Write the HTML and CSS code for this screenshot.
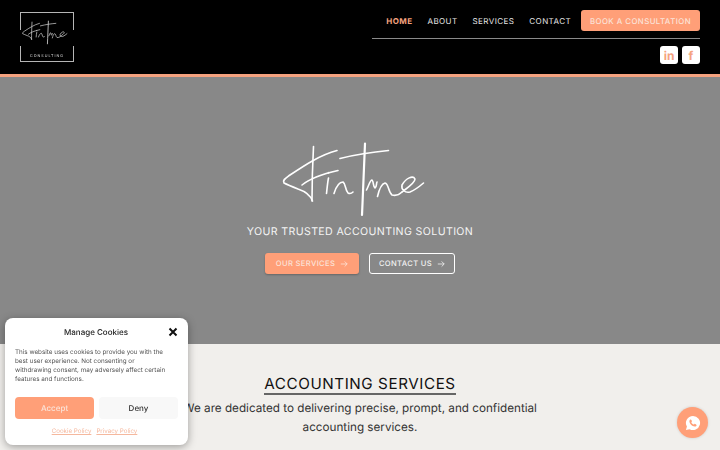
FILE: index.html
```html
<!DOCTYPE html>
<html lang="en">
<head>
<meta charset="utf-8">
<title>Fintune Consulting</title>
<link rel="stylesheet" href="styles.css">
</head>
<body>
<svg class="defs" width="0" height="0" aria-hidden="true">
  <symbol id="script" viewBox="20 10 155 85">
    <g class="script-lines">
      <path d="M77 20.5C60 25 45 35 30 45C26 48 22 50 24 53C28 55 33 57 38 59C44 61 50 64 52.5 71"/>
      <path d="M53.5 16.5C52.5 35 52 55 52 71"/>
      <path d="M42 55C48 50 58 45 78 40.5"/>
      <path d="M68.5 42.5v.5M68.5 48C67.5 53 67 59 66.5 63.5"/>
      <path d="M74 63.5C76 57 79 52 83 52C86 54 85 60 88 63C90 64 92 63 93 62"/>
      <path class="script-bold" d="M105 13.5C104 40 103 62 102 85"/>
      <path d="M80 28.5C98 24 112 22 128.5 20.5"/>
      <path d="M106.5 60C109 55 110 50 112 50C114 52 113 57 115 58C117 57 116 54 117 52"/>
      <path d="M117.5 66.5C119 60 121 54 125 53C129 54 128 62 132 65C136 66 140 64 142 62"/>
      <path d="M142 62C147 58 155 53 155 49C153 45 146 48 142 55C141 60 145 63 150 62C155 60 160 56 163.5 53"/>
    </g>
  </symbol>
</svg>

<header class="site-header">
  <a class="logo" href="#">
    <svg class="logo-script"><use href="#script"/></svg>
    <span class="logo-sub">CONSULTING</span>
  </a>
  <div class="header-right">
    <nav class="nav">
      <a class="nav-link active" href="#">HOME</a>
      <a class="nav-link" href="#">ABOUT</a>
      <a class="nav-link" href="#">SERVICES</a>
      <a class="nav-link" href="#">CONTACT</a>
      <a class="book" href="#">BOOK A CONSULTATION</a>
    </nav>
    <div class="socials">
      <a class="social" href="#">in</a>
      <a class="social social-f" href="#">f</a>
    </div>
  </div>
</header>

<section class="hero">
  <svg class="hero-script"><use href="#script"/></svg>
  <p class="tagline">YOUR TRUSTED ACCOUNTING SOLUTION</p>
  <div class="hero-actions">
    <a class="btn btn-fill" href="#">OUR SERVICES
      <svg class="arrow" viewBox="0 0 10 10"><path d="M1 5H9M5.8 1.8L9 5L5.8 8.2"/></svg>
    </a>
    <a class="btn btn-line" href="#">CONTACT US
      <svg class="arrow" viewBox="0 0 10 10"><path d="M1 5H9M5.8 1.8L9 5L5.8 8.2"/></svg>
    </a>
  </div>
</section>

<section class="services">
  <h2 class="services-title">ACCOUNTING SERVICES</h2>
  <p class="services-text">We are dedicated to delivering precise, prompt, and confidential<br>accounting services.</p>
</section>

<aside class="cookie">
  <div class="cookie-head">
    <span class="cookie-title">Manage Cookies</span>
    <svg class="cookie-close" viewBox="0 0 10 10"><path d="M1.5 1.5L8.5 8.5M8.5 1.5L1.5 8.5"/></svg>
  </div>
  <p class="cookie-text">This website uses cookies to provide you with the best user experience. Not consenting or withdrawing consent, may adversely affect certain features and functions.</p>
  <div class="cookie-actions">
    <button class="cookie-btn accept">Accept</button>
    <button class="cookie-btn deny">Deny</button>
  </div>
  <div class="cookie-links">
    <a href="#">Cookie Policy</a>
    <a href="#">Privacy Policy</a>
  </div>
</aside>

<a class="chat" href="#">
  <svg viewBox="0 0 24 24" class="chat-icon">
    <path class="bubble" d="M12 3.5a8.5 8.5 0 0 0-7.3 12.8L3.5 20.5l4.3-1.1A8.5 8.5 0 1 0 12 3.5Z"/>
    <path class="phone" d="M9.2 7.8c-.5 0-1.5.8-1.5 2.2 0 2.8 3.4 6.3 6.3 6.3 1.4 0 2.3-1 2.3-1.7 0-.5-1.8-1.6-2.2-1.6-.4 0-.8.9-1.2.9-.8 0-2.9-2-2.9-2.8 0-.4.8-.8.8-1.2 0-.5-1-2.1-1.6-2.1Z"/>
  </svg>
</a>
</body>
</html>
```
FILE: styles.css
```css
* { box-sizing: border-box; }
html, body { margin: 0; padding: 0; }
body {
  width: 720px;
  height: 450px;
  overflow: hidden;
  background: #f1efec;
  font-family: Inter, "Liberation Sans", sans-serif;
  text-rendering: geometricPrecision;
  position: relative;
}
a { text-decoration: none; color: inherit; }
.defs { position: absolute; }
.script-lines {
  fill: none;
  stroke: currentColor;
  stroke-linecap: round;
  stroke-linejoin: round;
  stroke-width: var(--script-width, 1.6);
}
.script-bold { stroke-width: var(--script-bold, 2.2); }

.site-header {
  height: 77px;
  background: #000;
  border-bottom: 3px solid #f5a27f;
  display: flex;
  justify-content: space-between;
  padding: 0 20px;
}
.logo {
  width: 54px;
  height: 50px;
  margin-top: 12px;
  display: flex;
  flex-direction: column;
  color: #d8d8d8;
  border: 1px solid #b5b5b5;
  position: relative;
  --script-width: 2.2;
  --script-bold: 2.6;
}
.logo::before {
  content: "";
  position: absolute;
  left: -1px;
  right: -1px;
  top: 17px;
  height: 16px;
  background: #000;
}
.logo-script { width: 50px; height: 27px; margin-top: 7px; flex: none; position: relative; }
.logo-sub {
  margin-top: auto;
  margin-bottom: 3px;
  text-align: center;
  font-size: 3.7px;
  letter-spacing: 1px;
  color: #ddd;
  line-height: 5px;
  position: relative;
  will-change: opacity;
}

.header-right {
  width: 328px;
  display: flex;
  flex-direction: column;
  align-items: stretch;
}
.nav {
  height: 39px;
  padding-top: 10px;
  padding-bottom: 7px;
  border-bottom: 1px solid #8a8a8a;
  display: flex;
  align-items: center;
  justify-content: flex-end;
  gap: 15px;
}
.nav-link {
  font-size: 8px;
  letter-spacing: .42px;
  color: #e6e6e6;
  font-weight: 400;
}
.nav-link.active { color: #f5a27f; font-weight: 700; }
.book {
  width: 119px;
  height: 21px;
  margin-left: -5px;
  border-radius: 3px;
  background: #ff9f78;
  color: #fbe3d8;
  font-size: 7.8px;
  font-weight: 500;
  letter-spacing: .45px;
  display: flex;
  align-items: center;
  justify-content: center;
}
.socials {
  display: flex;
  justify-content: flex-end;
  gap: 4px;
  margin-top: 7px;
}
.social {
  width: 18px;
  height: 18px;
  border-radius: 3px;
  background: #fff;
  color: #f5a27f;
  font-size: 12px;
  font-weight: 700;
  display: flex;
  align-items: center;
  justify-content: center;
}

.hero {
  height: 267px;
  background: #888;
  display: flex;
  flex-direction: column;
  align-items: center;
  color: #fff;
}
.hero-script { width: 155px; height: 85px; margin-top: 63px; margin-left: -5px; flex: none; color: #fff; }
.tagline {
  margin: 0;
  font-size: 10.6px;
  line-height: 14px;
  letter-spacing: .38px;
  color: #f4f4f4;
}
.hero-actions { display: flex; gap: 10px; margin-top: 14px; }
.btn {
  height: 21px;
  border-radius: 3px;
  font-size: 7.6px;
  letter-spacing: .35px;
  font-weight: 500;
  display: flex;
  align-items: center;
  justify-content: center;
  gap: 5px;
}
.btn-fill { width: 94px; background: #ff9f78; color: #fbe3d8; box-shadow: 0 1px 2px rgba(0,0,0,.25); }
.btn-line { width: 86px; border: 1px solid #fff; color: #f2f2f2; }
.arrow { width: 8px; height: 8px; fill: none; stroke: currentColor; stroke-width: 1; }

.services {
  display: flex;
  flex-direction: column;
  align-items: center;
  padding-top: 31px;
}
.services-title {
  margin: 0;
  font-size: 15.2px;
  line-height: 18px;
  font-weight: 400;
  letter-spacing: .58px;
  color: #111;
  border-bottom: 2px solid #666;
}
.services-text {
  margin: 4px 0 0;
  text-align: center;
  white-space: nowrap;
  font-size: 11.7px;
  line-height: 19px;
  color: #333;
}

.cookie {
  position: absolute;
  left: 5px;
  top: 318px;
  width: 183px;
  height: 127px;
  background: #fff;
  border-radius: 8px;
  box-shadow: 0 2px 8px rgba(0,0,0,.35);
  padding: 0 10px;
  color: #333;
  will-change: opacity;
}
.cookie-head {
  height: 27px;
  display: flex;
  align-items: center;
  justify-content: center;
  position: relative;
}
.cookie-title { font-size: 8px; font-weight: 500; color: #222; margin-right: 1px; }
.cookie-close {
  position: absolute;
  right: 0;
  top: 9px;
  width: 10px;
  height: 10px;
  fill: none;
  stroke: #111;
  stroke-width: 2;
}
.cookie-text {
  margin: 3px 0 0;
  width: 153px;
  font-size: 6.3px;
  line-height: 9.1px;
  color: #555;
}
.cookie-actions { display: flex; gap: 5px; margin-top: 13px; }
.cookie-btn {
  flex: none;
  width: 79px;
  height: 22px;
  border: 0;
  border-radius: 4px;
  font: 500 8px Inter, sans-serif;
  text-rendering: geometricPrecision;
  padding: 0;
}
.accept { background: #ff9f78; color: #fbe3d8; }
.deny { background: #f8f8f8; color: #333; }
.cookie-links {
  display: flex;
  justify-content: center;
  gap: 5px;
  margin-top: 9px;
  padding-right: 4px;
  font-size: 6.2px;
  color: #f5b89e;
}
.cookie-links a { text-decoration: underline; }

.chat {
  position: absolute;
  left: 677px;
  top: 407px;
  width: 31px;
  height: 31px;
  border-radius: 50%;
  background: #ff9f78;
  box-shadow: 0 0 3px rgba(0,0,0,.15);
  display: flex;
  align-items: center;
  justify-content: center;
}
.chat-icon { width: 20px; height: 20px; }
.bubble { fill: #fff; }
.phone { fill: #ff9f78; }
```
